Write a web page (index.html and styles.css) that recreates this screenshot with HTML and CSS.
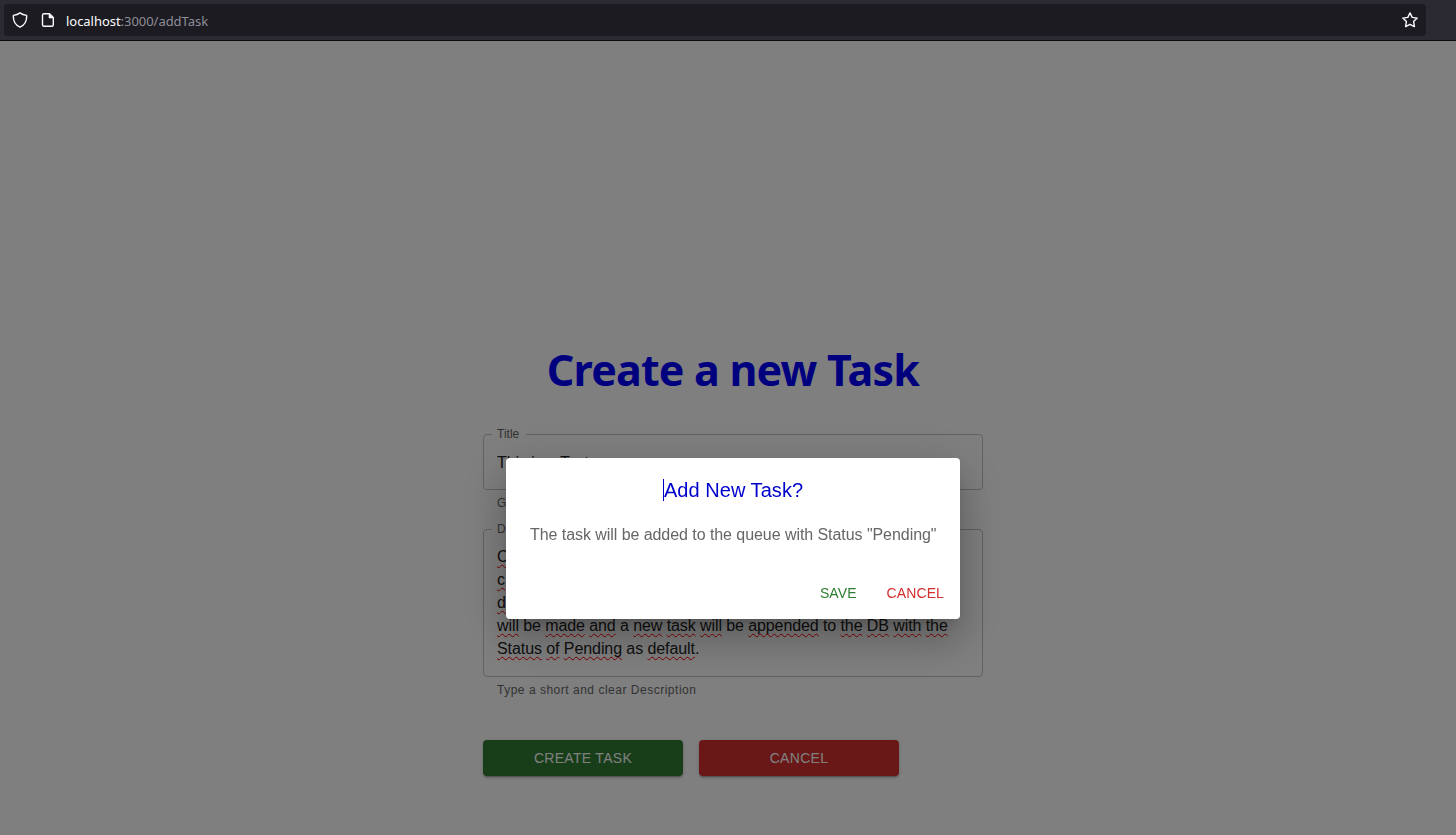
FILE: index.html
```html
<!DOCTYPE html>
<html lang="en">
<head>
<meta charset="utf-8">
<title>Create a new Task</title>
<link rel="stylesheet" href="styles.css">
</head>
<body>
<header class="toolbar">
  <div class="urlbar">
    <svg class="icon" viewBox="0 0 16 16"><path d="M8 .9C6.200 2.300 4 3.100 1.400 3.400 1 8.500 3.200 13 8 15.200 12.800 13 15 8.500 14.600 3.400 12 3.100 9.800 2.300 8 .9Z"/></svg>
    <svg class="icon page-icon" viewBox="0 0 16 16"><path d="M4 1.700H9.500L13.300 5.500V12.800Q13.300 14.300 11.800 14.300H4Q2.500 14.300 2.500 12.800V3.200Q2.500 1.700 4 1.700Z"/><path class="fold" d="M9 1.700V6H13.300Z"/></svg>
    <span class="url"><span class="host">localhost</span>:3000/addTask</span>
    <svg class="icon star" viewBox="0 0 16 16"><path d="M8 .9L10.200 5.400 15.200 6.100 11.600 9.600 12.400 14.600 8 12.300 3.600 14.600 4.400 9.600 .8 6.100 5.800 5.400Z"/></svg>
  </div>
</header>
<main class="page">
  <h1 class="heading">Create a new Task</h1>
  <div class="field title-field">
    <span class="label label-title">Title</span>
    <div class="value">This is a Test</div>
  </div>
  <p class="helper helper-title">G</p>
  <div class="field description-field">
    <span class="label label-description">D</span>
    <div class="value">
      <div><u>C</u></div>
      <div><u>c</u></div>
      <div><u>d</u></div>
      <div class="line-four"><u>will</u> be <u>made</u> <u>and</u> a <u>new</u> <u>task</u> <u>will</u> be <u>appended</u> to <u>the</u> <u>DB</u> <u>with</u> <u>the</u></div>
      <div class="line-five"><u>Status</u> <u>of</u> <u>Pending</u> as <u>default</u>.</div>
    </div>
  </div>
  <p class="helper helper-description">Type a short and clear Description</p>
  <div class="buttons">
    <button class="button create">CREATE TASK</button>
    <button class="button cancel">CANCEL</button>
  </div>
</main>
<div class="backdrop">
  <section class="dialog" role="dialog">
    <h2 class="dialog-title"><span class="caret"></span>Add New Task?</h2>
    <p class="dialog-text">The task will be added to the queue with Status "Pending"</p>
    <div class="actions"><button class="action save">SAVE</button><button class="action dismiss">CANCEL</button></div>
  </section>
</div>
</body>
</html>
```
FILE: styles.css
```css
* { box-sizing: border-box; }
body {
  margin: 0;
  height: 835px;
  overflow: hidden;
  background: #fff;
  font-family: "Liberation Sans", Arial, sans-serif;
}
button { border: 0; font-family: inherit; }
.toolbar {
  height: 41px;
  padding: 4px 30px 4px 4px;
  background: #2b2a33;
  border-bottom: 1px solid #0c0c0d;
}
.urlbar {
  display: flex;
  align-items: center;
  height: 32px;
  padding: 0 8px;
  border-radius: 4px;
  background: #1c1b22;
}
.icon {
  width: 16px;
  height: 16px;
  fill: none;
  stroke: #fbfbfe;
  stroke-width: 1.4;
  stroke-linejoin: round;
}
.page-icon { margin-left: 12px; }
.fold { fill: #fbfbfe; stroke-width: .6; }
.url {
  margin-left: 10px;
  padding-top: 2px;
  font: 13px/18px "Noto Sans", sans-serif;
  letter-spacing: -.04px;
  color: #8f8e97;
}
.host { color: #fbfbfe; }
.star { margin-left: auto; }
.page {
  width: 500px;
  margin-left: 483px;
  padding-top: 299px;
}
.heading {
  margin: 0 0 34px;
  font: bold 43px/60px "Noto Sans", sans-serif;
  letter-spacing: -.8px;
  text-align: center;
  white-space: nowrap;
  color: #00f;
}
.field {
  position: relative;
  padding: 15px 13px;
  border: 1px solid #c4c4c4;
  border-radius: 4px;
}
.title-field { height: 56px; padding-top: 16px; }
.description-field { height: 148px; }
.label {
  position: absolute;
  top: -8px;
  left: 8px;
  padding: 0 5px;
  background: #fff;
  font-size: 12px;
  line-height: 14px;
  color: #666;
}
.label-title { padding-right: 7px; }
.label-description { width: 70px; }
.value {
  font-size: 16px;
  line-height: 23px;
  letter-spacing: -.08px;
  white-space: nowrap;
  color: #212121;
}
.value u {
  text-decoration: underline wavy #f00 1.3px;
  text-decoration-skip-ink: none;
  text-underline-offset: 2px;
}
.line-four { letter-spacing: -.09px; }
.helper {
  margin: 3px 14px 0;
  font-size: 12px;
  line-height: 20px;
  letter-spacing: .4px;
  color: #666;
}
.helper-title { margin-bottom: 16px; }
.helper-description { letter-spacing: .51px; }
.buttons {
  display: flex;
  gap: 16px;
  margin-top: 40px;
}
.button {
  width: 200px;
  height: 36px;
  border-radius: 4px;
  font-size: 14px;
  letter-spacing: .3px;
  color: #fff;
  box-shadow: 0 3px 1px -2px rgba(0,0,0,.2), 0 2px 2px rgba(0,0,0,.14), 0 1px 5px rgba(0,0,0,.12);
}
.create { background: #2e7d32; }
.cancel { background: #d32f2f; }
.backdrop {
  position: fixed;
  inset: 41px 0 0;
  padding: 417px 0 0 506px;
  background: rgba(0,0,0,.5);
}
.dialog {
  width: 454px;
  height: 161px;
  padding: 16px 8px 8px 24px;
  border-radius: 4px;
  background: #fff;
  box-shadow: 0 11px 15px -7px rgba(0,0,0,.2), 0 24px 38px 3px rgba(0,0,0,.14), 0 9px 46px 8px rgba(0,0,0,.12);
}
.dialog-title {
  display: flex;
  justify-content: center;
  align-items: center;
  height: 32px;
  margin: 0 16px 0 0;
  font-size: 20px;
  font-weight: 400;
  letter-spacing: .05px;
  color: #00c;
}
.caret { width: 1px; height: 22px; background: #00c; }
.dialog-text {
  margin: 17px 0 0;
  font-size: 16px;
  line-height: 23px;
  letter-spacing: -.06px;
  white-space: nowrap;
  color: #666;
}
.actions {
  display: flex;
  justify-content: flex-end;
  gap: 14px;
  margin-top: 29px;
}
.action {
  height: 36px;
  padding: 0 8px;
  background: transparent;
  font-size: 14px;
  letter-spacing: .1px;
}
.save { color: #2e7d32; }
.dismiss { color: #d32f2f; }
```
